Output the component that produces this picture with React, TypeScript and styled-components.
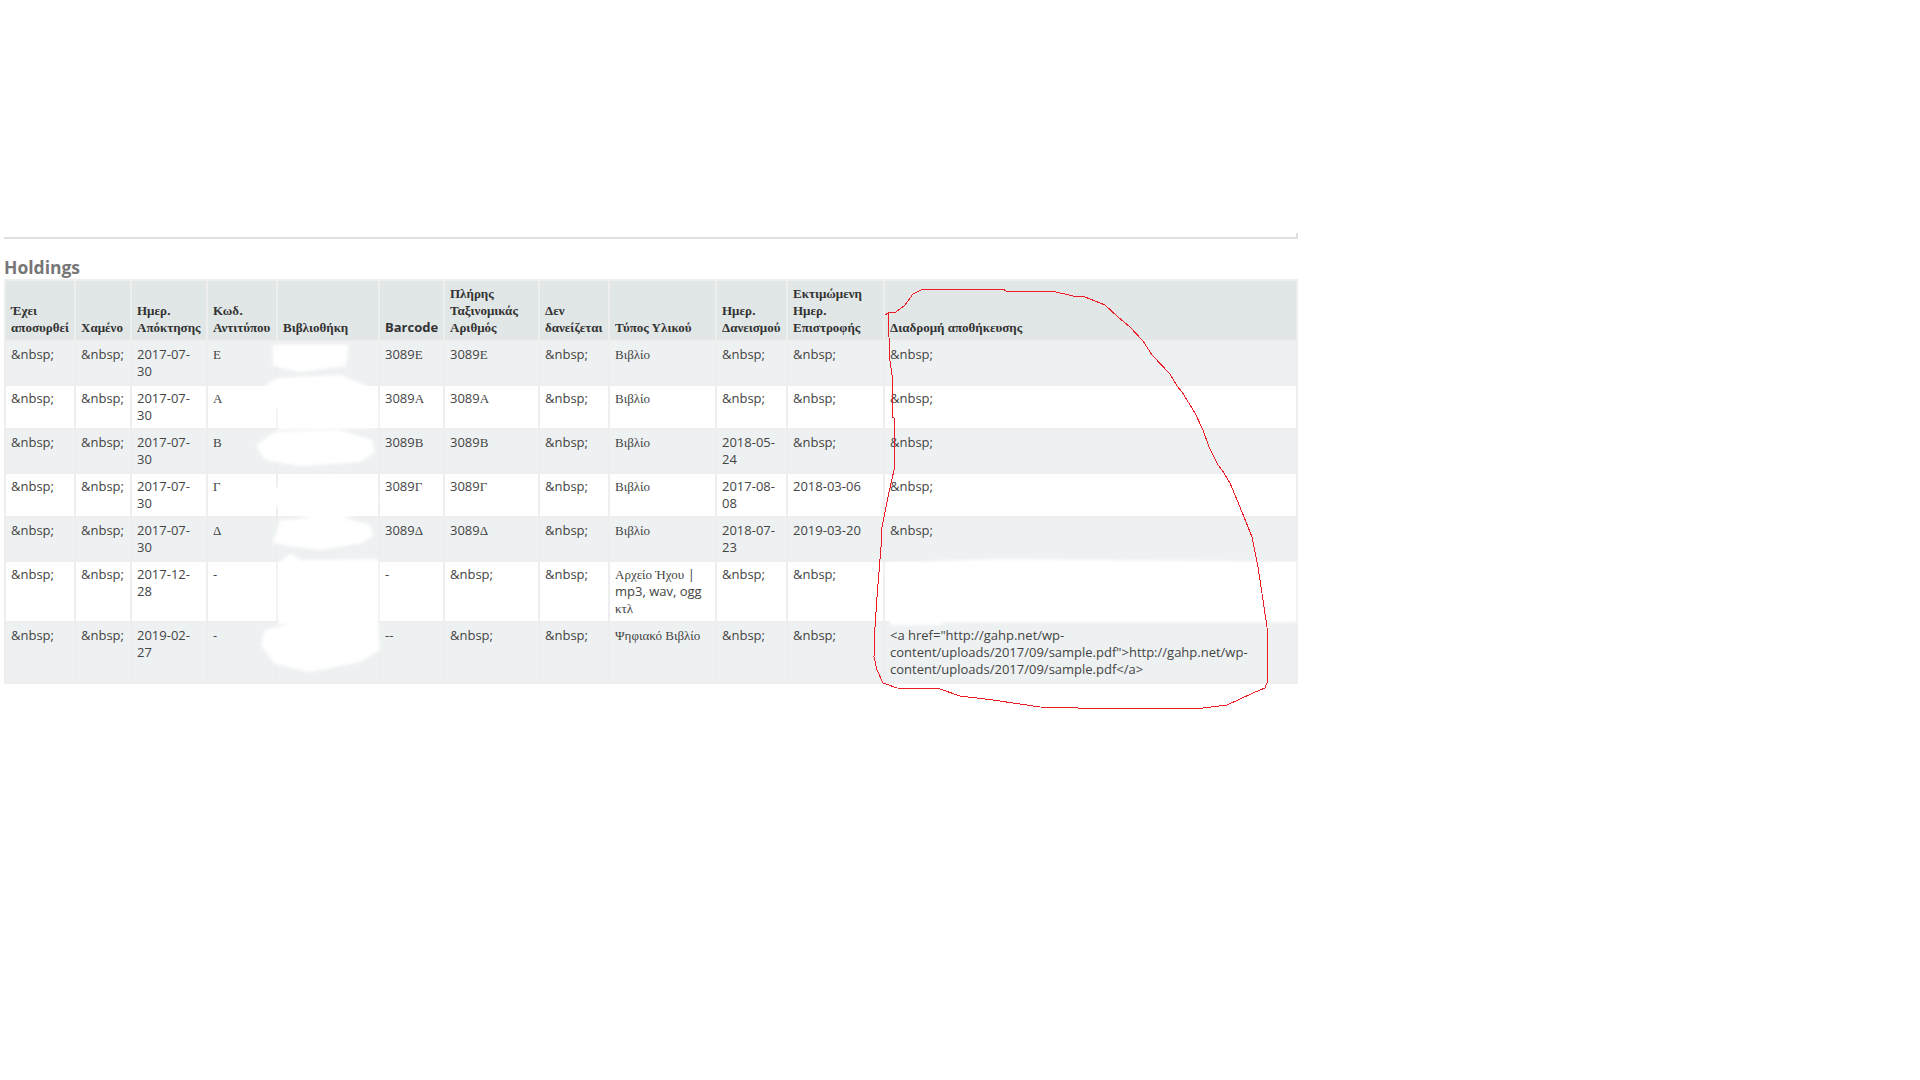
import React from "react";
import styled, { createGlobalStyle } from "styled-components";

const GlobalStyle = createGlobalStyle`
  html, body {
    margin: 0;
    padding: 0;
    background: #fff;
  }
`;

const Page = styled.div`
  position: relative;
  width: 1920px;
  height: 1080px;
  padding: 233px 0 0 4px;
  box-sizing: border-box;
  overflow: hidden;
  font-family: "Open Sans", "Noto Sans", sans-serif;
  font-size: 13px;
  line-height: 17px;
  color: #444;
`;

const Rule = styled.div`
  width: 1292px;
  height: 4px;
  border-bottom: 2px solid #e0e0e0;
  border-right: 2px solid #e0e0e0;
`;

const Title = styled.h2`
  margin: 16px 0 0;
  font-size: 17.5px;
  line-height: 24px;
  font-weight: 700;
  color: #777;
`;

const Table = styled.table`
  width: 1294px;
  table-layout: fixed;
  border-collapse: separate;
  border-spacing: 2px;
  background: #eeeeee;
`;

const HeadCell = styled.th<{ $w: number }>`
  width: ${(p) => p.$w}px;
  box-sizing: border-box;
  padding: 4px 5px;
  vertical-align: bottom;
  text-align: left;
  font-weight: 700;
  color: #333;
  background: #e1e6e6;
`;

const Row = styled.tr<{ $odd: boolean }>`
  background: ${(p) => (p.$odd ? "#eef1f2" : "#ffffff")};
`;

const Cell = styled.td`
  padding: 4px 5px;
  vertical-align: top;
`;

const Greek = styled.span`
  font-family: "Liberation Serif", "Times New Roman", serif;
`;

const Annotation = styled.svg`
  position: absolute;
  top: 0;
  left: 0;
  pointer-events: none;
`;

const mixed = (text: string) =>
  text.split(/([\u0370-\u03ff\u1f00-\u1fff]+(?:\s+[\u0370-\u03ff\u1f00-\u1fff]+)*)/).map((part, i) =>
    i % 2 === 1 ? <Greek key={i}>{part}</Greek> : part
  );

const columns: [string, number][] = [
  ["Έχει αποσυρθεί", 68],
  ["Χαμένο", 54],
  ["Ημερ. Απόκτησης", 74],
  ["Κωδ. Αντιτύπου", 68],
  ["Βιβλιοθήκη", 100],
  ["Barcode", 63],
  ["Πλήρης Ταξινομικάς Αριθμός", 93],
  ["Δεν δανείζεται", 68],
  ["Τύπος Υλικού", 105],
  ["Ημερ. Δανεισμού", 69],
  ["Εκτιμώμενη Ημερ. Επιστροφής", 95],
  ["Διαδρομή αποθήκευσης", 411],
];

const N = "&nbsp;";
const LINK =
  '<a href="http://gahp.net/wp-content/uploads/2017/09/sample.pdf">http://gahp.net/wp-content/uploads/2017/09/sample.pdf</a>';

const rows: string[][] = [
  [N, N, "2017-07-30", "Ε", "", "3089Ε", "3089Ε", N, "Βιβλίο", N, N, N],
  [N, N, "2017-07-30", "Α", "", "3089Α", "3089Α", N, "Βιβλίο", N, N, N],
  [N, N, "2017-07-30", "Β", "", "3089Β", "3089Β", N, "Βιβλίο", "2018-05-24", N, N],
  [N, N, "2017-07-30", "Γ", "", "3089Γ", "3089Γ", N, "Βιβλίο", "2017-08-08", "2018-03-06", N],
  [N, N, "2017-07-30", "Δ", "", "3089Δ", "3089Δ", N, "Βιβλίο", "2018-07-23", "2019-03-20", N],
  [N, N, "2017-12-28", "-", "", "-", N, N, "Αρχείο Ήχου | mp3, wav, ogg κτλ", N, N, ""],
  [N, N, "2019-02-27", "-", "", "--", N, N, "Ψηφιακό Βιβλίο", N, N, LINK],
];

const outline =
  "M885 315 L888 313 L896 312 L905 305 L913 294 L923 289 L1003 289 L1006 291 L1052 291 L1073 296 L1085 297 L1105 305 L1118 317 L1130 327 L1143 341 L1152 355 L1170 374 L1177 386 L1182 392 L1195 413 L1203 430 L1209 447 L1218 465 L1222 470 L1230 483 L1242 512 L1252 537 L1258 567 L1263 600 L1267 627 L1268 680 L1265 688 L1253 693 L1227 705 L1203 708 L1078 708 L1040 707 L993 700 L960 696 L940 689 L897 688 L883 683 L877 670 L874 657 L875 627 L877 597 L881 547 L882 527 L888 497 L894 470 L894 418 L892 417 L892 375 L890 361 L888 313";

function App() {
  return (
    <Page>
      <GlobalStyle />
      <Rule />
      <Title>Holdings</Title>
      <Table>
        <thead>
          <tr>
            {columns.map(([label, w]) => (
              <HeadCell key={label} $w={w}>
                {mixed(label)}
              </HeadCell>
            ))}
          </tr>
        </thead>
        <tbody>
          {rows.map((row, r) => (
            <Row key={r} $odd={r % 2 === 0}>
              {row.map((value, c) => (
                <Cell key={c}>{mixed(value)}</Cell>
              ))}
            </Row>
          ))}
        </tbody>
      </Table>
      <Annotation width="1920" height="1080" viewBox="0 0 1920 1080">
        <defs>
          <filter id="smudge" x="-10%" y="-10%" width="120%" height="120%">
            <feGaussianBlur stdDeviation="1.5" />
          </filter>
        </defs>
        <g fill="#fff" filter="url(#smudge)">
          <path d="M273 345 L348 345 L346 366 L300 372 L273 366 Z" />
          <path d="M276 378 L340 375 L372 388 L378 400 L378 428 L278 430 L277 408 L257 392 Z" />
          <path d="M275 432 L340 430 L372 440 L375 452 L360 462 L300 466 L265 460 L256 445 Z" />
          <ellipse cx="325" cy="497" rx="53" ry="22" />
          <path d="M280 520 L340 517 L370 525 L373 535 L362 543 L320 550 L290 546 L273 543 Z" />
          <path d="M278 563 L290 554 L302 560 L378 559 L378 624 L278 624 Z" />
          <path d="M290 624 L378 622 L380 650 L360 662 L310 672 L275 664 L261 645 L265 630 Z" />
          <path d="M885 563 L1000 559 L1296 562 L1296 622 L944 622 L940 625 L890 625 Z" />
        </g>
        <path d={outline} fill="none" stroke="#ed1c24" strokeWidth="1" shapeRendering="crispEdges" />
      </Annotation>
    </Page>
  );
}

export default App;
